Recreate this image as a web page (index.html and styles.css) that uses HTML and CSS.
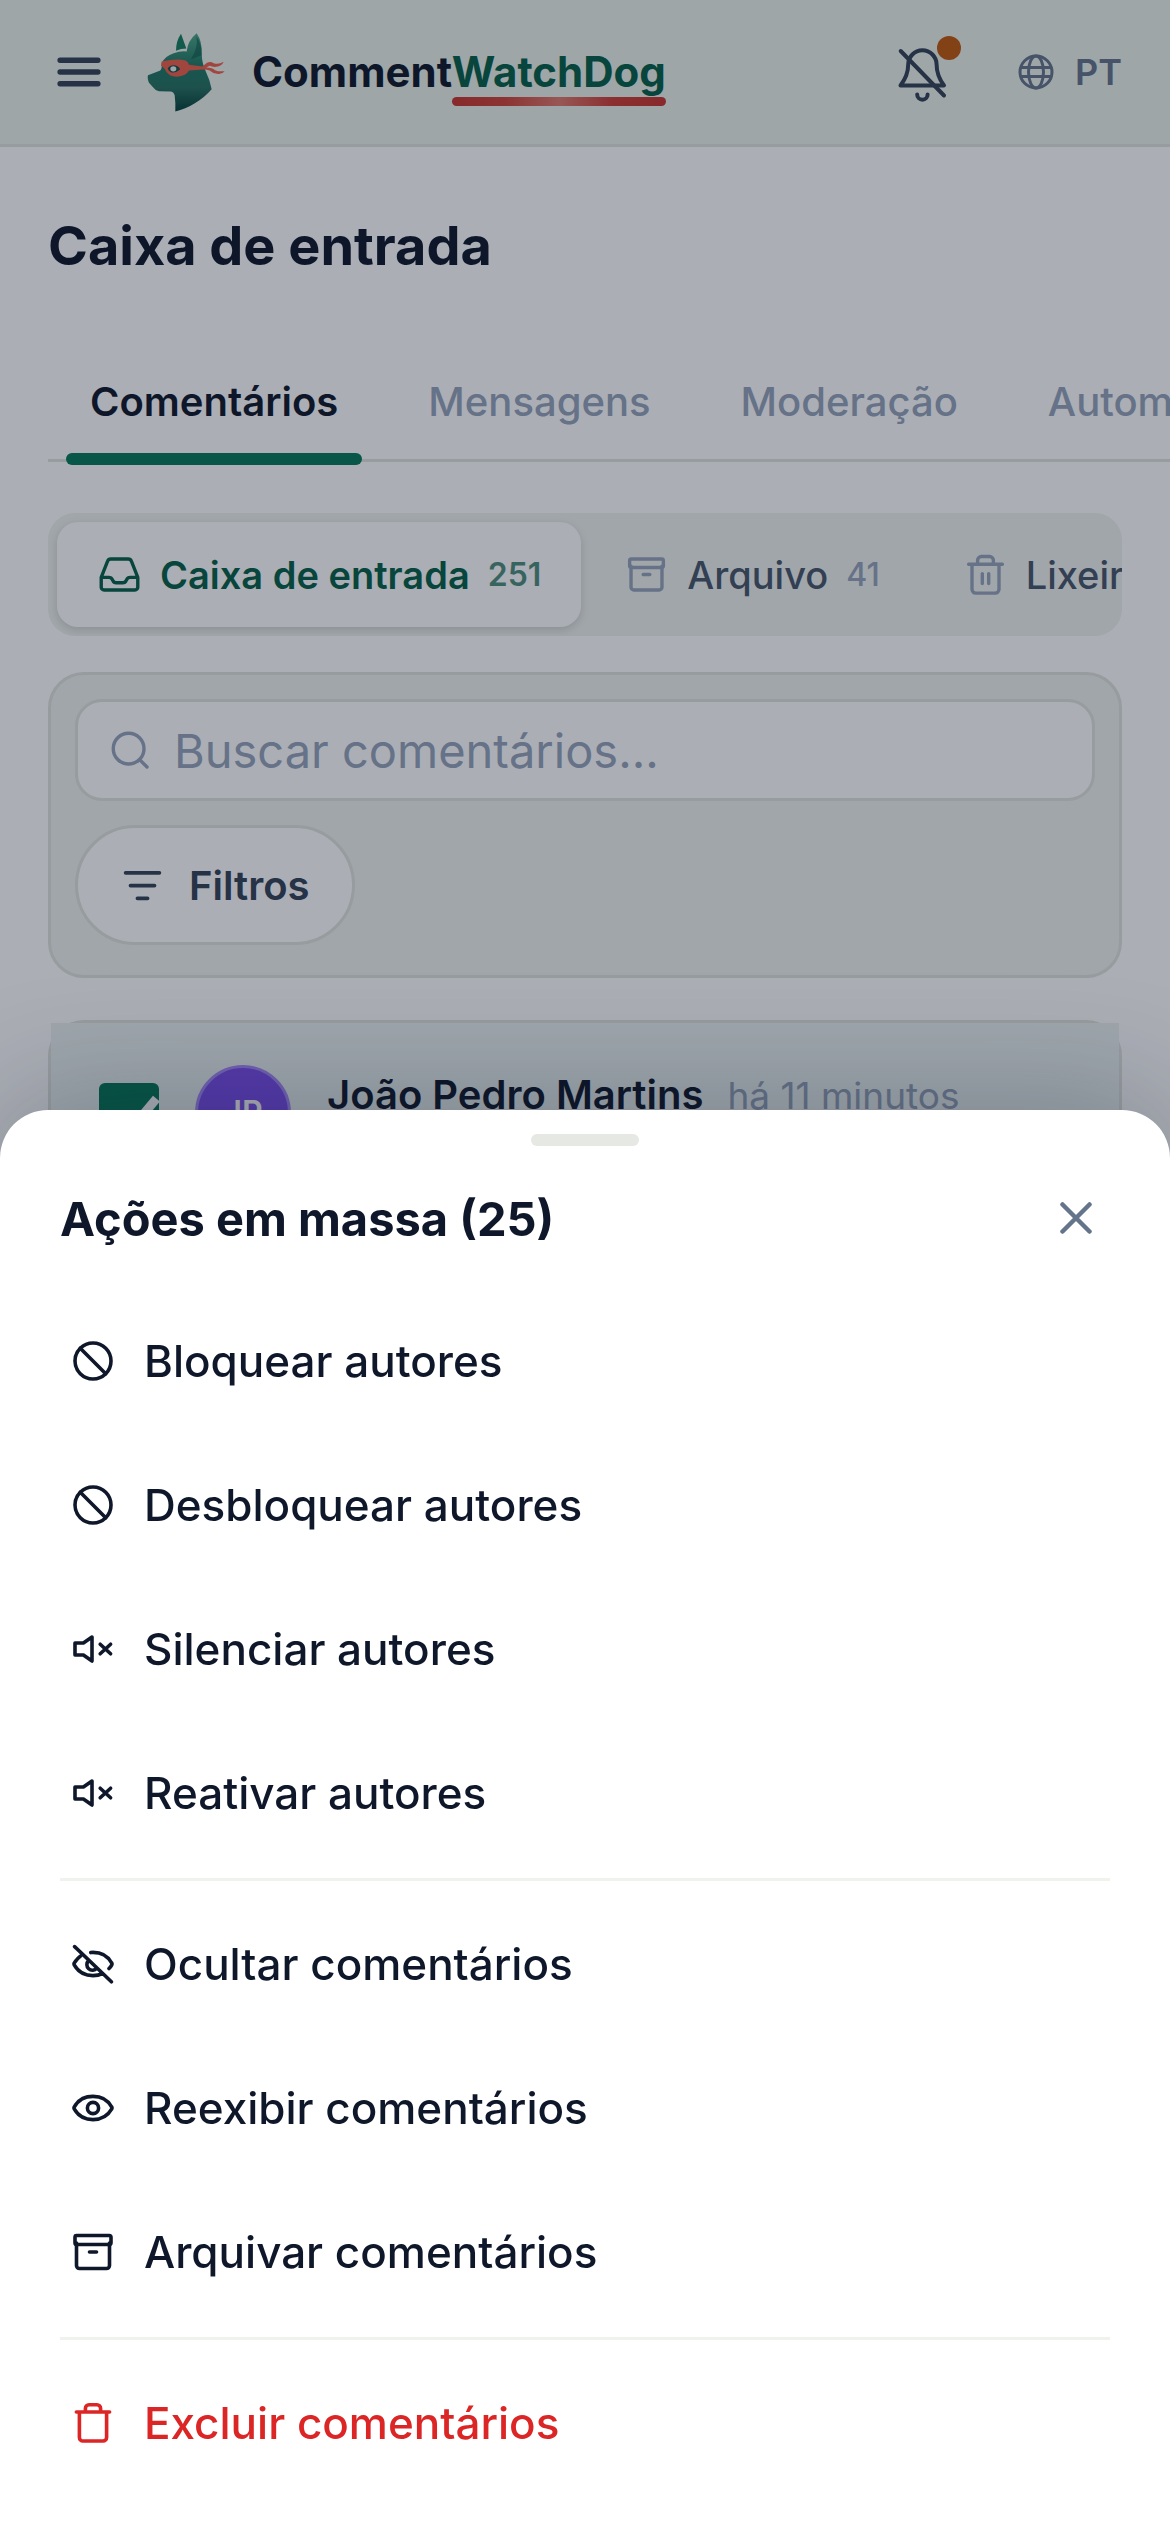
FILE: index.html
```html
<!DOCTYPE html>
<html lang="pt">
<head>
    <meta charset="UTF-8">
    <meta name="viewport" content="width=device-width, initial-scale=1.0">
    <title>CommentWatchDog - Caixa de entrada</title>
    <link rel="stylesheet" href="styles.css">
</head>
<body>
    <!-- Shared icon shapes -->
    <svg class="sprite" aria-hidden="true">
        <symbol id="icon-archive" viewBox="0 0 24 24">
            <path d="M20.25 7.5v11.25a1.5 1.5 0 0 1-1.5 1.5H5.25a1.5 1.5 0 0 1-1.5-1.5V7.5"/>
            <rect x="3" y="3.75" width="18" height="4.5" rx="0.9"/>
            <path d="M10.25 12h3.5"/>
        </symbol>
        <symbol id="icon-ban" viewBox="0 0 24 24">
            <circle cx="12" cy="12" r="9"/>
            <path d="M5.64 5.64l12.72 12.72"/>
        </symbol>
        <symbol id="icon-mute" viewBox="0 0 24 24">
            <path d="M11.5 6L7.2 9H3v6h4.2l4.3 3z"/>
            <path d="M15.6 9.6l5.2 4.8M20.8 9.6l-5.2 4.8"/>
        </symbol>
    </svg>

    <header class="topbar">
        <button class="icon-btn" type="button" aria-label="Menu">
            <svg class="icon icon-menu" viewBox="0 0 24 24"><path d="M3.6 6.75h16.8M3.6 12h16.8M3.6 17.25h16.8"/></svg>
        </button>
        <a class="brand" href="#">
            <svg class="brand-logo" viewBox="50 38 234 236" aria-hidden="true">
                <defs>
                    <linearGradient id="fur" x1="0" y1="0" x2="0" y2="1">
                        <stop offset="0" stop-color="#4fa88a"/>
                        <stop offset="0.4" stop-color="#1f7a63"/>
                        <stop offset="0.7" stop-color="#25705f"/>
                        <stop offset="1" stop-color="#063f38"/>
                    </linearGradient>
                </defs>
                <path fill="#14805f" d="M152 40L168 84Q152 84 137 91Q137 62 152 40Z"/>
                <path fill="url(#fur)" d="M199 38Q216 62 214 100Q215 130 226 152Q238 176 244 206C215 240 175 262 135 273Q136 245 133 224Q130 214 120 213L86 212Q74 209 68 200L56 187Q50 172 53 164L88 151Q96 147 94 128Q104 106 130 98Q150 91 169 93Q172 60 199 38Z"/>
                <path fill="#0c5c49" opacity="0.6" d="M198 48Q205 80 182 116L214 104Q214 66 198 48Z"/>
                <path fill="#f0604a" d="M94 123Q140 112 166 120Q175 125 176 133L216 138L230 127Q240 121 250 128Q264 133 280 124Q274 138 258 139Q246 140 238 136L228 141Q246 142 254 149Q266 154 283 152Q274 163 260 160Q246 158 238 150Q228 146 216 147L176 150Q168 166 140 169Q112 168 104 146Q98 138 92 136Z"/>
                <path fill="#174e48" d="M112 144Q120 132 136 135Q148 140 149 147Q136 158 124 156Q114 152 112 144Z"/>
                <ellipse cx="129" cy="145" rx="9" ry="8" fill="#e6f2ee"/>
            </svg>
            <span class="brand-name">Comment<span class="brand-accent">WatchDog</span></span>
        </a>
        <button class="icon-btn bell" type="button" aria-label="Notificações">
            <svg class="bell-icon" viewBox="0 0 54 72">
                <path d="M5.5 49.5C10.5 43 13.2 36 13.2 28.5a14.2 14.2 0 0 1 28.4 0C41.6 36 44.2 43 49 49.5z"/>
                <path d="M5.7 15L49 59.5M22.2 58.5a5.2 5.2 0 0 0 10.4 0"/>
            </svg>
            <span class="bell-dot"></span>
        </button>
        <button class="lang" type="button">
            <svg class="icon icon-globe" viewBox="0 0 36 36"><circle cx="18" cy="18" r="16"/><ellipse cx="18" cy="18" rx="7.5" ry="16"/><path d="M3 13.5h30M3 22.5h30"/></svg>
            PT
        </button>
    </header>

    <main class="page">
        <h1>Caixa de entrada</h1>

        <nav class="tabs">
            <a class="tab active" href="#">Comentários</a>
            <a class="tab" href="#">Mensagens</a>
            <a class="tab" href="#">Moderação</a>
            <a class="tab" href="#">Automação</a>
        </nav>

        <div class="folders">
            <button class="folder selected" type="button">
                <svg class="icon" viewBox="0 0 24 24"><path d="M2.25 13.5h4.1a2 2 0 0 1 1.8 1.2l.3.5a2 2 0 0 0 1.8 1.2h3.5a2 2 0 0 0 1.8-1.2l.3-.5a2 2 0 0 1 1.8-1.2h4.1M2.25 13.5v5.25a1.5 1.5 0 0 0 1.5 1.5h16.5a1.5 1.5 0 0 0 1.5-1.5V13.5L18.4 5a1.9 1.9 0 0 0-1.8-1.25H7.4A1.9 1.9 0 0 0 5.6 5z"/></svg>
                Caixa de entrada
                <span class="count">251</span>
            </button>
            <button class="folder" type="button">
                <svg class="icon"><use href="#icon-archive"/></svg>
                Arquivo
                <span class="count">41</span>
            </button>
            <button class="folder" type="button">
                <svg class="icon" viewBox="0 0 24 24"><path d="M3 6.5h18M4.8 6.5v13.4a2 2 0 0 0 2 2h10.4a2 2 0 0 0 2-2V6.5M7.8 6.5V4.4a2 2 0 0 1 2-2h4.4a2 2 0 0 1 2 2v2.1M10.3 11.5v5.3M13.7 11.5v5.3"/></svg>
                Lixeira
            </button>
        </div>

        <section class="filters">
            <label class="search">
                <svg class="icon" viewBox="0 0 24 24"><circle cx="11" cy="11" r="8.2"/><path d="M17 17l3.8 3.8"/></svg>
                <input type="text" placeholder="Buscar comentários..." aria-label="Buscar comentários">
            </label>
            <button class="filter-btn" type="button">
                <svg class="icon" viewBox="0 0 24 24"><path d="M3 5.2h18M5.6 12h12.8M9.3 18.8h5.4"/></svg>
                Filtros
            </button>
        </section>

        <article class="comment">
            <div class="comment-head">
                <input class="comment-check" type="checkbox" checked aria-label="Selecionar comentário">
                <span class="avatar">JP</span>
                <div class="comment-meta">
                    <strong class="author">João Pedro Martins</strong>
                    <span class="time">há 11 minutos</span>
                </div>
            </div>
        </article>
    </main>

    <div class="overlay"></div>

    <div class="sheet" role="dialog" aria-labelledby="sheet-title">
        <div class="handle"></div>
        <div class="sheet-head">
            <h2 id="sheet-title">Ações em massa (25)</h2>
            <button class="icon-btn close" type="button" aria-label="Fechar">
                <svg class="icon" viewBox="0 0 24 24"><path d="M6 6l12 12M18 6L6 18"/></svg>
            </button>
        </div>
        <div class="actions">
            <button class="action" type="button"><svg class="icon"><use href="#icon-ban"/></svg>Bloquear autores</button>
            <button class="action" type="button"><svg class="icon"><use href="#icon-ban"/></svg>Desbloquear autores</button>
            <button class="action" type="button"><svg class="icon"><use href="#icon-mute"/></svg>Silenciar autores</button>
            <button class="action" type="button"><svg class="icon"><use href="#icon-mute"/></svg>Reativar autores</button>
            <hr>
            <button class="action" type="button">
                <svg class="icon" viewBox="0 0 24 24"><path d="M10.9 6.3Q11.400 6.200 12 6.200c4.400 0 7.600 2.200 9.300 5.200q.4.6 0 1.200-.6 1-1.300 1.700M5.700 8.100Q3.900 9.500 2.700 11.400q-.4.6 0 1.200C4.400 15.600 7.600 17.800 12 17.800q2.600 0 4.700-1M9.800 10.300a2.800 2.800 0 1 0 4.100 3.800M2.800 3.300l18.400 17.600"/></svg>
                Ocultar comentários
            </button>
            <button class="action" type="button">
                <svg class="icon" viewBox="0 0 24 24"><path d="M2.7 11.4C4.4 8.4 7.6 6.2 12 6.2s7.6 2.2 9.3 5.2q.4.6 0 1.2c-1.7 3-4.9 5.2-9.3 5.2s-7.6-2.2-9.3-5.2q-.4-.6 0-1.2z"/><circle cx="12" cy="12" r="2.8"/></svg>
                Reexibir comentários
            </button>
            <button class="action" type="button"><svg class="icon"><use href="#icon-archive"/></svg>Arquivar comentários</button>
            <hr>
            <button class="action danger" type="button">
                <svg class="icon" viewBox="0 0 24 24"><path d="M3.7 6.5h16.6M5.2 6.5v12.7a1.8 1.8 0 0 0 1.8 1.8h10a1.8 1.8 0 0 0 1.8-1.8V6.5M8.2 6.5V4.7a1.8 1.8 0 0 1 1.8-1.8h4a1.8 1.8 0 0 1 1.8 1.8v1.8"/></svg>
                Excluir comentários
            </button>
        </div>
    </div>
</body>
</html>
```
FILE: styles.css
```css
* {
    margin: 0;
    padding: 0;
    box-sizing: border-box;
}

body {
    font-family: Inter, 'Liberation Sans', sans-serif;
    background-color: #ffffff;
    color: #0f172a;
    height: 100vh;
    overflow: hidden;
}

button,
input {
    font: inherit;
    color: inherit;
    background: none;
    border: none;
}

a {
    color: inherit;
    text-decoration: none;
}

.sprite {
    display: none;
}

.icon {
    flex: none;
    width: 45px;
    height: 45px;
    fill: none;
    stroke: currentColor;
    stroke-width: 1.8;
    stroke-linecap: round;
    stroke-linejoin: round;
}

.icon-btn {
    display: flex;
}

/* Top bar */
.topbar {
    display: flex;
    align-items: center;
    height: 147px;
    padding: 0 48px 0 52px;
    background: #ebf3ec;
    border-bottom: 3px solid #e0e3dd;
}

.icon-menu {
    width: 54px;
    height: 54px;
    stroke: #334155;
    stroke-width: 2.4;
}

.brand {
    display: flex;
    align-items: center;
    gap: 27px;
    margin-left: 41px;
    margin-right: auto;
}

.brand-logo {
    width: 78px;
    height: 79px;
}

.brand-name {
    font-size: 42px;
    font-weight: 700;
    line-height: 60px;
}

.brand-accent {
    position: relative;
    color: #065f46;
}

.brand-accent::after {
    content: '';
    position: absolute;
    left: 0;
    right: 0;
    bottom: -9px;
    height: 9px;
    border-radius: 5px;
    background: linear-gradient(90deg, #c9342d, #cf4438 25%, #e07a6c 50%, #cf3c34 75%, #c9342d);
}

.bell {
    position: relative;
    margin-right: 69px;
}

.bell-icon {
    width: 54px;
    height: 72px;
    fill: none;
    stroke: #334155;
    stroke-width: 4;
    stroke-linecap: round;
    stroke-linejoin: round;
}

.bell-dot {
    position: absolute;
    top: 0;
    right: -12px;
    width: 24px;
    height: 24px;
    border-radius: 50%;
    background: #c2590c;
}

.lang {
    display: flex;
    align-items: center;
    gap: 21px;
    color: #64748b;
    font-size: 36px;
    font-weight: 600;
}

.icon-globe {
    width: 36px;
    height: 36px;
    stroke-width: 3;
}

/* Page */
.page {
    padding: 60px 48px 0;
}

h1 {
    font-size: 54px;
    font-weight: 700;
    line-height: 78px;
}

.tabs {
    display: flex;
    gap: 6px;
    margin-top: 60px;
    margin-right: -48px;
    height: 117px;
    border-bottom: 3px solid #e0e3dd;
    overflow-x: clip;
}

.tab {
    position: relative;
    padding: 0 42px;
    font-size: 40px;
    font-weight: 500;
    line-height: 114px;
    color: #94a3b8;
}

.tab.active {
    font-weight: 600;
    color: #0f172a;
}

.tab.active::after {
    content: '';
    position: absolute;
    left: 18px;
    right: 18px;
    bottom: -6px;
    height: 12px;
    border-radius: 6px;
    background: #047857;
}

.folders {
    display: flex;
    gap: 3px;
    margin-top: 51px;
    padding: 9px;
    background: #f0f3ee;
    border-radius: 27px;
    overflow: hidden;
}

.folder {
    display: flex;
    flex: none;
    align-items: center;
    gap: 18px;
    height: 105px;
    padding: 0 40px;
    border-radius: 21px;
    font-size: 38px;
    font-weight: 500;
    color: #475569;
}

.folder .icon {
    color: #94a3b8;
}

.count {
    font-size: 32px;
    color: #94a3b8;
}

.folder.selected {
    background: #ffffff;
    color: #065f46;
    font-weight: 600;
    box-shadow: 0 3px 9px rgba(15, 23, 42, 0.15);
}

.selected .icon {
    color: inherit;
}

.selected .count {
    color: inherit;
    opacity: 0.7;
}

.filters {
    display: flex;
    flex-direction: column;
    align-items: flex-start;
    gap: 24px;
    margin-top: 36px;
    padding: 24px 24px 30px;
    background: #f0f3ee;
    border: 3px solid #e0e3dd;
    border-radius: 36px;
}

.search {
    display: flex;
    align-items: center;
    gap: 21px;
    width: 100%;
    height: 102px;
    padding: 0 30px;
    background: #ffffff;
    border: 3px solid #e0e3dd;
    border-radius: 27px;
    color: #94a3b8;
}

.search input {
    flex: 1;
    min-width: 0;
    font-size: 47px;
    outline: none;
}

.search input::placeholder {
    color: #94a3b8;
    opacity: 1;
}

.filter-btn {
    display: flex;
    align-items: center;
    gap: 24px;
    height: 120px;
    padding: 0 42px;
    background: #ffffff;
    border: 3px solid #e0e3dd;
    border-radius: 60px;
    color: #334155;
    font-size: 40px;
    font-weight: 600;
}

.filter-btn .icon {
    stroke-width: 2;
}

.comment {
    margin-top: 42px;
    border: 3px solid #e0e3dd;
    border-radius: 36px;
}

.comment-head {
    display: flex;
    align-items: flex-start;
    gap: 36px;
    padding: 42px 48px;
    background: #edf4f3;
}

.comment-check {
    appearance: none;
    flex: none;
    width: 60px;
    height: 60px;
    margin-top: 18px;
    border-radius: 6px;
    background: #047857;
}

.comment-check::before {
    content: '';
    display: block;
    width: 21px;
    height: 42px;
    margin: 3px 18px;
    border: solid #ffffff;
    border-width: 0 9px 9px 0;
    transform: rotate(40deg);
}

.avatar {
    flex: none;
    width: 96px;
    height: 96px;
    border: 3px solid #a78bfa;
    border-radius: 50%;
    background: #7c4df0;
    color: #ffffff;
    font-size: 32px;
    font-weight: 600;
    line-height: 90px;
    text-align: center;
}

.comment-meta {
    display: flex;
    align-items: baseline;
    gap: 24px;
    line-height: 60px;
}

.author {
    font-size: 40px;
    font-weight: 600;
}

.time {
    font-size: 37px;
    color: #94a3b8;
}

.overlay {
    position: fixed;
    inset: 0;
    background: rgba(15, 23, 42, 0.35);
}

/* Bottom sheet */
.sheet {
    position: fixed;
    left: 0;
    right: 0;
    bottom: 0;
    padding: 24px 60px 36px;
    background: #ffffff;
    border-radius: 48px 48px 0 0;
    box-shadow: 0 -12px 120px rgba(15, 23, 42, 0.25);
}

.handle {
    width: 108px;
    height: 12px;
    margin: 0 auto;
    border-radius: 6px;
    background: #e5e8e3;
}

.sheet-head {
    display: flex;
    align-items: center;
    justify-content: space-between;
    height: 144px;
    padding-right: 7px;
}

h2 {
    font-size: 47px;
    font-weight: 700;
}

.close .icon {
    width: 54px;
    height: 54px;
    color: #64748b;
    stroke-width: 2;
}

.action {
    display: flex;
    align-items: center;
    gap: 27px;
    width: 100%;
    height: 144px;
    padding: 0 9px 2px;
    font-size: 44px;
    font-weight: 500;
    text-align: left;
}

.action .icon {
    width: 48px;
    height: 48px;
}

.action.danger {
    color: #dc2626;
}

hr {
    height: 3px;
    margin: 12px 0;
    border: none;
    background: #f0f2ee;
}
```
